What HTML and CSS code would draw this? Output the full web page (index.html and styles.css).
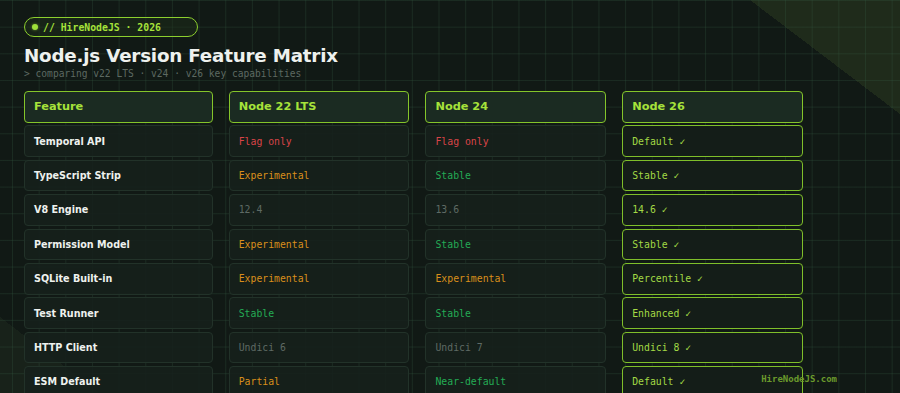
FILE: index.html
```html
<!DOCTYPE html>
<html lang="en">
<head>
<meta charset="utf-8">
<title>Node.js Version Feature Matrix</title>
<link rel="stylesheet" href="styles.css">
</head>
<body>
<div class="page">
  <div class="pill"><span class="dot"></span>// HireNodeJS · 2026</div>
  <h1 class="title">Node.js Version Feature Matrix</h1>
  <p class="subtitle">&gt; comparing v22 LTS · v24 · v26 key capabilities</p>

  <div class="matrix">
    <div class="cell head">Feature</div>
    <div class="cell head">Node 22 LTS</div>
    <div class="cell head">Node 24</div>
    <div class="cell head">Node 26</div>

    <div class="cell name">Temporal API</div>
    <div class="cell val red">Flag only</div>
    <div class="cell val red">Flag only</div>
    <div class="cell val hi">Default ✓</div>

    <div class="cell name">TypeScript Strip</div>
    <div class="cell val orange">Experimental</div>
    <div class="cell val green">Stable</div>
    <div class="cell val hi">Stable ✓</div>

    <div class="cell name">V8 Engine</div>
    <div class="cell val gray">12.4</div>
    <div class="cell val gray">13.6</div>
    <div class="cell val hi">14.6 ✓</div>

    <div class="cell name">Permission Model</div>
    <div class="cell val orange">Experimental</div>
    <div class="cell val green">Stable</div>
    <div class="cell val hi">Stable ✓</div>

    <div class="cell name">SQLite Built-in</div>
    <div class="cell val orange">Experimental</div>
    <div class="cell val orange">Experimental</div>
    <div class="cell val hi">Percentile ✓</div>

    <div class="cell name">Test Runner</div>
    <div class="cell val green">Stable</div>
    <div class="cell val green">Stable</div>
    <div class="cell val hi">Enhanced ✓</div>

    <div class="cell name">HTTP Client</div>
    <div class="cell val gray">Undici 6</div>
    <div class="cell val gray">Undici 7</div>
    <div class="cell val hi">Undici 8 ✓</div>

    <div class="cell name">ESM Default</div>
    <div class="cell val orange">Partial</div>
    <div class="cell val green">Near-default</div>
    <div class="cell val hi">Default ✓</div>
  </div>
</div>
<div class="watermark">HireNodeJS.com</div>
</body>
</html>
```

FILE: styles.css
```css
html, body {
  margin: 0;
  padding: 0;
  width: 900px;
  height: 393px;
  overflow: hidden;
}

body {
  position: relative;
  background-color: #111915;
  background-image:
    linear-gradient(to right, rgba(52, 90, 66, 0.28) 1px, transparent 1px),
    linear-gradient(to bottom, rgba(52, 90, 66, 0.28) 1px, transparent 1px),
    linear-gradient(to top right, transparent 50%, #1f2b1b 50%),
    linear-gradient(to bottom left, transparent 50%, #18221a 50%);
  background-size: 26.67px 26.67px, 26.67px 26.67px, 150px 114px, 99px 76px;
  background-position: 12px 0, 0 0, right top, left bottom;
  background-repeat: repeat, repeat, no-repeat, no-repeat;
  font-family: "DejaVu Sans", sans-serif;
}

.page {
  padding: 15px 24px 0 24px;
}

.pill {
  display: inline-flex;
  align-items: center;
  gap: 5px;
  height: 18px;
  padding: 0 36px 0 7px;
  border: 1.4px solid #8ccf2e;
  border-radius: 999px;
  font-family: "DejaVu Sans Mono", monospace;
  font-weight: bold;
  font-size: 9.8px;
  color: #a6e23a;
  background: rgba(30, 45, 25, 0.5);
}

.dot {
  width: 6px;
  height: 6px;
  border-radius: 50%;
  background: #9ee03a;
  box-shadow: 0 0 3px rgba(158, 224, 58, 0.6);
}

.title {
  margin: 8px 0 0 0;
  font-size: 18.3px;
  line-height: 22px;
  font-weight: bold;
  color: #eef1ee;
  letter-spacing: -0.2px;
}

.subtitle {
  margin: 0;
  font-family: "DejaVu Sans Mono", monospace;
  font-size: 9.6px;
  line-height: 13px;
  color: #5d6962;
}

.matrix {
  margin-top: 11px;
  width: 779px;
  display: grid;
  grid-template-columns: 188.7px repeat(3, 1fr);
  column-gap: 16px;
  row-gap: 2.7px;
}

.cell {
  height: 31.7px;
  box-sizing: border-box;
  display: flex;
  align-items: center;
  padding: 0 9px;
  border: 1px solid #223229;
  border-radius: 4px;
  background: rgba(22, 32, 27, 0.88);
}

.head {
  border: 1.4px solid #84c52a;
  background: #1b2b22;
  color: #a6e23a;
  font-weight: bold;
  font-size: 11.3px;
}

.name {
  color: #eef1ee;
  font-weight: bold;
  font-size: 9.6px;
}

.val {
  font-family: "DejaVu Sans Mono", monospace;
  font-size: 9.8px;
}

.red { color: #d94448; }
.orange { color: #d98f1a; }
.green { color: #24ac55; }
.gray { color: #5e6a64; }

.hi {
  border: 1.6px solid #7fbf2a;
  color: #a3da45;
  background: #141d18;
}

.watermark {
  position: absolute;
  right: 63px;
  bottom: 9px;
  font-family: "DejaVu Sans Mono", monospace;
  font-weight: bold;
  font-size: 9px;
  color: #6b9a2c;
}
```
